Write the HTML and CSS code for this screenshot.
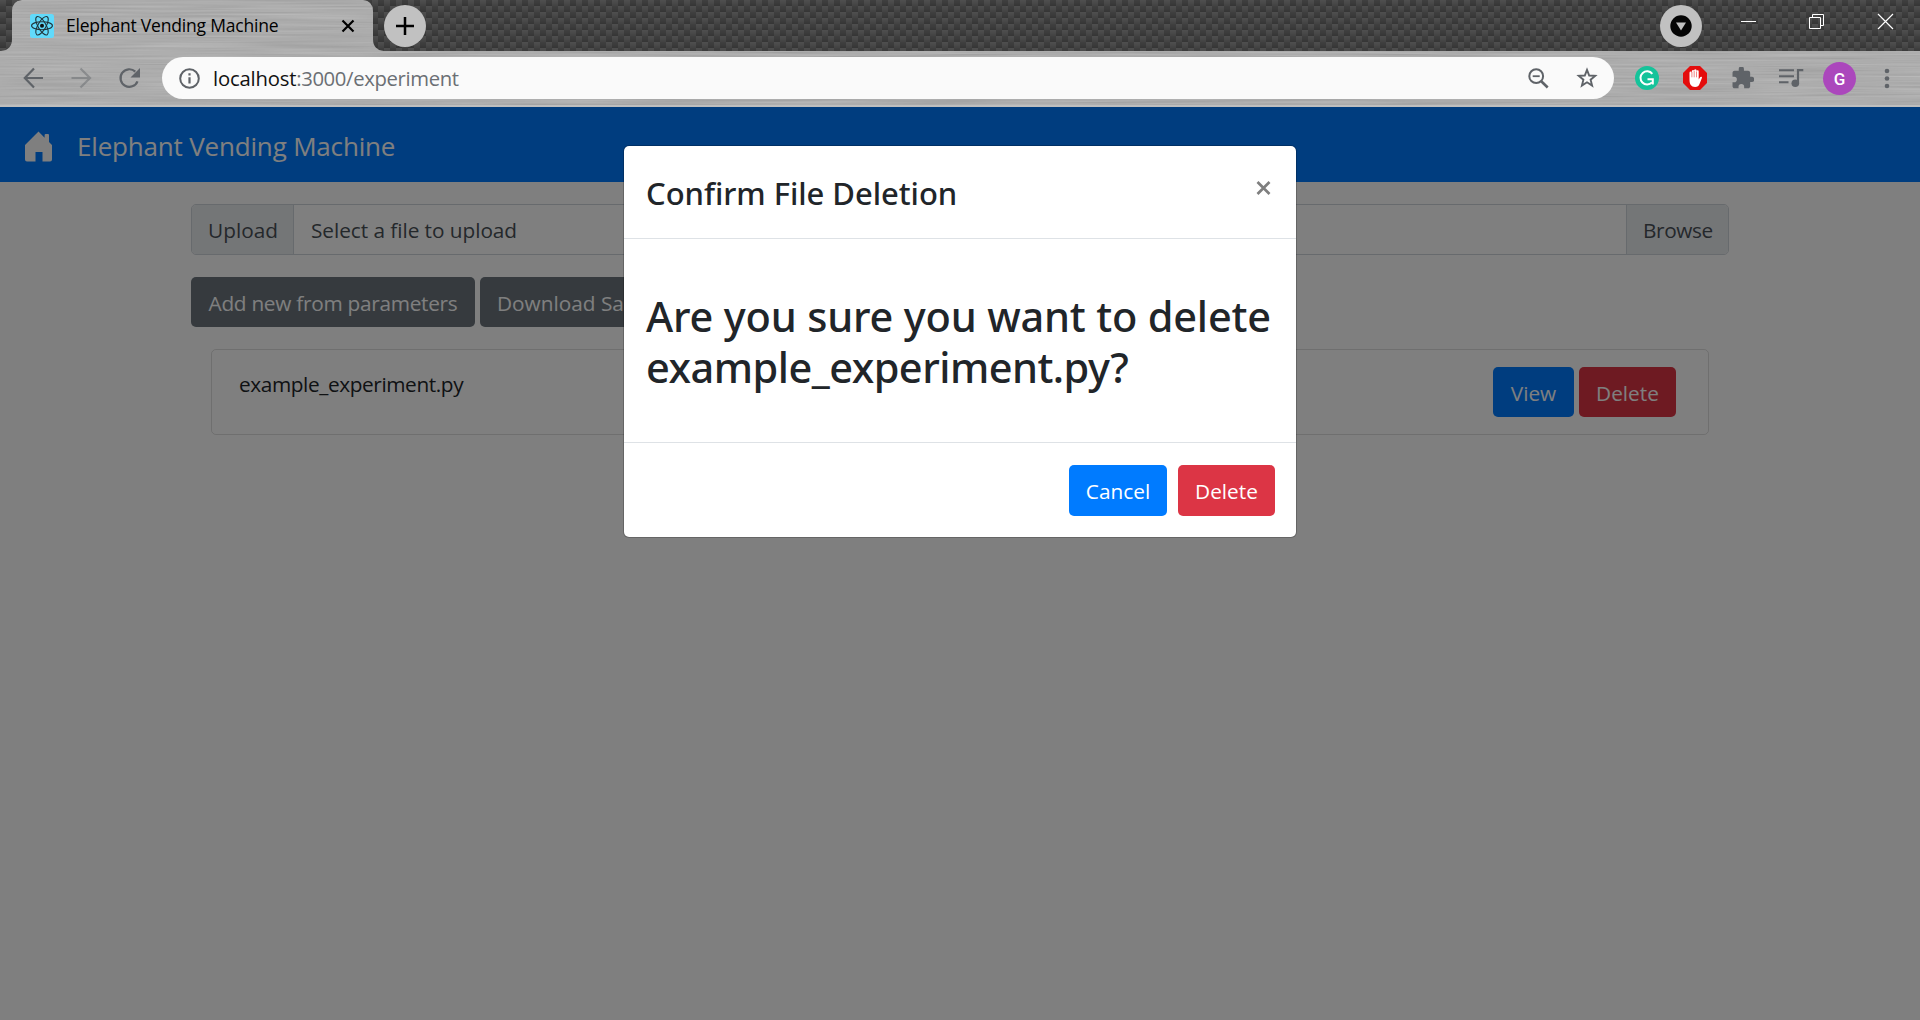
FILE: index.html
```html
<!DOCTYPE html>
<html lang="en">
<head>
<meta charset="utf-8">
<title>Elephant Vending Machine</title>
<link rel="stylesheet" href="styles.css">
</head>
<body>
<header class="browser">
  <svg class="metal" width="1920" height="107" viewBox="0 0 1920 107">
    <defs>
      <filter id="brushed" x="0" y="0" width="100%" height="100%" color-interpolation-filters="sRGB">
        <feTurbulence type="fractalNoise" baseFrequency="0.008 0.5" numOctaves="2" seed="4"/>
        <feColorMatrix values="0.13 0 0 0 0.61  0.13 0 0 0 0.61  0.13 0 0 0 0.61  0 0 0 0 1"/>
        <feComposite operator="in" in2="SourceGraphic"/>
      </filter>
    </defs>
    <path filter="url(#brushed)" d="M0 51H1Q12 50 12 39V11Q12 1 22 0H363Q373 1 373 11V39Q373 50 384 51H1920V107H0Z"/>
    <path fill="#bebebe" d="M0 105H1920V107H0Z"/>
  </svg>
  <div class="tabstrip">
    <div class="tab">
      <svg class="favicon" width="24" height="24" viewBox="0 0 24 24">
        <rect width="24" height="24" rx="2.5" fill="#61dafb"/>
        <g fill="none" stroke="#20343a" stroke-width="1.1">
          <ellipse cx="12" cy="11.7" rx="10.4" ry="4"/>
          <ellipse cx="12" cy="11.7" rx="10.4" ry="4" transform="rotate(60 12 11.7)"/>
          <ellipse cx="12" cy="11.7" rx="10.4" ry="4" transform="rotate(120 12 11.7)"/>
        </g>
        <circle cx="12" cy="11.7" r="2" fill="#111"/>
      </svg>
      <span class="tab-title">Elephant Vending Machine</span>
      <svg class="tab-close" width="14" height="14" viewBox="0 0 14 14"><path d="M1.5 1.5l11 11M12.500 1.500l-11 11" stroke="#000" stroke-width="2.200"/></svg>
    </div>
    <div class="round new-tab">
      <svg width="18" height="18" viewBox="0 0 18 18"><path d="M9 0v18M0 9h18" stroke="#000" stroke-width="2.500"/></svg>
    </div>
    <div class="round search-tabs">
      <svg width="22" height="22" viewBox="0 0 22 22"><circle cx="11" cy="11" r="10.700" fill="#050505"/><path d="M6 7.500h10l-5 8z" fill="#c0c0c0"/></svg>
    </div>
    <svg class="window-buttons" width="155" height="17" viewBox="0 0 155 17" fill="none" stroke="#fff">
      <path d="M1 8.500h15"/>
      <path d="M69.500 4.500h11v11h-11zM72.500 4.500v-3h11v11h-3"/>
      <path d="M138 1l15 15M153 1l-15 15" stroke-width="1.200"/>
    </svg>
  </div>
  <div class="toolbar">
    <svg class="nav-icons" width="118" height="22" viewBox="0 0 118 22" fill="none" stroke="#5f6368" stroke-width="2.200">
      <path d="M20 11H2M11 1.500L1.800 11l9.200 9.500"/>
      <path opacity=".45" d="M48.500 11h18M57.500 1.500L67 11l-9.500 9.500"/>
      <path d="M114.500 14.300A8.800 8.800 0 1 1 112.300 4.600"/>
      <path d="M117 1v9.500h-9.500z" fill="#5f6368" stroke="none"/>
    </svg>
    <div class="address">
      <svg width="21" height="21" viewBox="0 0 21 21"><circle cx="10.500" cy="10.500" r="9.300" fill="none" stroke="#5f6368" stroke-width="2"/><path d="M9.400 9.300h2.200v6.200H9.400zM9.400 5.300h2.200v2.200H9.400z" fill="#5f6368"/></svg>
      <span class="url"><b>localhost</b>:3000/experiment</span>
      <svg class="magnifier" width="21" height="21" viewBox="0 0 21 21" fill="none" stroke="#5f6368"><circle cx="8.200" cy="8.200" r="6.900" stroke-width="2"/><path d="M4.700 8.200h7" stroke-width="1.800"/><path d="M13 13l6.700 6.500" stroke-width="2.600"/></svg>
      <svg class="star" width="22" height="22" viewBox="0 0 22 22"><path d="M11 2.900l2.200 5.600 6 .4-4.600 3.800 1.500 5.900-5.100-3.300-5.100 3.300 1.500-5.900L2.800 8.900l6-.4z" fill="none" stroke="#5f6368" stroke-width="1.900"/></svg>
    </div>
    <svg class="ext grammarly" width="24" height="24" viewBox="0 0 24 24"><circle cx="12" cy="12" r="12" fill="#15c39a"/><path d="M17.300 7.800A6.600 6.600 0 1 0 17 16.300" fill="none" stroke="#fff" stroke-width="2"/><path d="M12.500 13.200h5.300v5.300" fill="none" stroke="#fff" stroke-width="2"/></svg>
    <svg class="ext adblock" width="24" height="24" viewBox="0 0 24 24"><path d="M7 0h10l7 7v10l-7 7H7l-7-7V7z" fill="#e40d0d"/><path d="M6.500 13.800V6.800a1.200 1.200 0 0 1 2.400 0V4.800a1.200 1.200 0 0 1 2.300 0V4a1.200 1.200 0 0 1 2.300 0v1.200a1.100 1.100 0 0 1 2.200 .2v8l1.400-2.200c.6-1 2.200-.5 1.900.6l-2.400 6c-.8 2.200-2.200 3.200-4.500 3.200-4 0-5.600-2.700-5.600-7.200z" fill="#fff"/><path d="M8.900 6v5.300M11.200 5v6.300M13.500 5.500v5.800" stroke="#e40d0d" stroke-width=".5"/></svg>
    <svg class="ext puzzle" width="22" height="22" viewBox="1.500 1.500 21.200 21.200"><path fill="#5f6368" d="M20.500 11H19V7c0-1.100-.9-2-2-2h-4V3.500a2.500 2.500 0 0 0-5 0V5H4c-1.100 0-2 .9-2 2v3.800h1.500a2.700 2.700 0 0 1 0 5.400H2V20c0 1.100.9 2 2 2h3.800v-1.500a2.700 2.700 0 0 1 5.400 0V22H17c1.100 0 2-.9 2-2v-4h1.500a2.500 2.500 0 0 0 0-5z"/></svg>
    <svg class="ext queue" width="25" height="20" viewBox="0 0 25 20"><path d="M0 2.200h15M0 8.200h15M0 14.200h9.500" stroke="#5f6368" stroke-width="2.100"/><circle cx="16.300" cy="15.300" r="3.800" fill="#5f6368"/><path d="M19 15.300V2.200h5.300" fill="none" stroke="#5f6368" stroke-width="2.200"/></svg>
    <span class="avatar">G</span>
    <svg class="ext kebab" width="6" height="21" viewBox="0 0 6 21" fill="#5f6368"><circle cx="3" cy="3" r="2.300"/><circle cx="3" cy="10.500" r="2.300"/><circle cx="3" cy="18" r="2.300"/></svg>
  </div>
</header>
<main class="page">
  <nav class="navbar">
    <svg width="27" height="31" viewBox="0 0 27 31" fill="#fff"><path d="M13.500 0.500L19.600 6.700V4.200q0-1.200 1.200-1.200h2.200q1 0 1 1.200V11.100L27 14V28.500q0 2-2 2H17.500V21H10.500V30.500H2q-2 0-2-2V14z"/></svg>
    <span class="brand">Elephant Vending Machine</span>
  </nav>
  <div class="container">
    <div class="upload">
      <span class="upload-label">Upload</span>
      <span class="upload-file">Select a file to upload</span>
      <span class="upload-browse">Browse</span>
    </div>
    <div class="actions">
      <button class="btn secondary add">Add new from parameters</button>
      <button class="btn secondary download">Download Sample</button>
    </div>
    <div class="file-card">
      <span class="file-name">example_experiment.py</span>
      <div class="file-actions">
        <button class="btn primary view">View</button>
        <button class="btn danger remove">Delete</button>
      </div>
    </div>
  </div>
  <div class="backdrop">
    <section class="modal">
      <div class="modal-header">
        <h4>Confirm File Deletion</h4>
        <svg width="15" height="14" viewBox="0 0 15 14"><path d="M1.500 1l12 12M13.500 1l-12 12" stroke="#7f7f7f" stroke-width="2.700"/></svg>
      </div>
      <div class="modal-body">
        <h2>Are you sure you want to delete<br><span class="target">example_experiment.py?</span></h2>
      </div>
      <div class="modal-footer">
        <button class="btn primary cancel">Cancel</button>
        <button class="btn danger confirm">Delete</button>
      </div>
    </section>
  </div>
</main>
</body>
</html>
```
FILE: styles.css
```css
* { box-sizing: border-box; }

body {
  margin: 0;
  width: 1920px;
  height: 1020px;
  overflow: hidden;
  display: flex;
  flex-direction: column;
  font: 20.8px "Open Sans", sans-serif;
  color: #212529;
}

svg { display: block; flex: none; }
span, h2, h4 { white-space: nowrap; }

/* Browser frame: woven dark strip with brushed-metal tab and toolbar */
.browser {
  position: relative;
  height: 107px;
  flex: none;
  background:
    linear-gradient(rgba(0, 0, 0, 0), rgba(0, 0, 0, .16)) 0 0 / 12px 6px,
    conic-gradient(#404040 25%, #4f4f4f 0 50%, #404040 0 75%, #4f4f4f 0) 0 0 / 12px 12px;
}
.metal { position: absolute; left: 0; top: 0; }
.tabstrip, .toolbar { position: relative; display: flex; align-items: center; }
.tabstrip { height: 51px; padding-left: 12px; }
.tab { width: 361px; height: 51px; padding: 0 18px 0 18px; display: flex; align-items: center; }
.tab-title { margin: 0 0 1px 12px; font-size: 17.5px; letter-spacing: -.2px; color: #000; }
.tab-close { margin-left: auto; }
.round {
  width: 42px; height: 42px; border-radius: 50%;
  background: #c1c1c1;
  display: flex; align-items: center; justify-content: center;
}
.new-tab { margin-left: 11px; }
.search-tabs { margin-left: 1234px; }
.window-buttons { margin: 0 0 8px 38px; }

.toolbar { height: 56px; padding-left: 22px; }
.nav-icons { margin: 0 0 2px 1px; }
.address {
  width: 1452px; height: 42px; margin: 0 0 2px 21px; padding: 0 16px 0 17px;
  border-radius: 21px; background: #fafafa;
  display: flex; align-items: center;
}
.url { margin-left: 13px; font-size: 20.3px; letter-spacing: -.36px; color: #6b6f74; }
.url b { font-weight: 400; color: #111; letter-spacing: -.2px; }
.magnifier { margin-left: auto; }
.star { margin-left: 27px; }
.ext { margin-bottom: 2px; }
.grammarly { margin-left: 21px; }
.adblock { margin-left: 24px; }
.puzzle { margin-left: 25px; }
.queue { margin-left: 25px; }
.avatar {
  width: 33px; height: 33px; margin: 0 0 1px 19px; border-radius: 50%;
  background: #ab47bc; color: #fff;
  font: 500 17px/34px Roboto, sans-serif; text-align: center;
}
.kebab { margin-left: 28px; }

/* Application page */
.page { position: relative; flex: 1; background: #fff; }
.navbar { height: 75px; padding-left: 25px; background: #007bff; color: #fff; display: flex; align-items: center; }
.navbar svg { margin-top: 3px; }
.brand { margin: 2px 0 0 25px; font-size: 26px; letter-spacing: -.18px; }
.container { padding: 22px 191px 0; }
.upload {
  height: 51px; display: flex; line-height: 50px;
  border: 1px solid #ced4da; border-radius: 5px; overflow: hidden;
  color: #495057;
}
.upload-label { width: 102px; padding-left: 16px; background: #e9ecef; border-right: 1px solid #ced4da; }
.upload-file { flex: 1; padding-left: 17px; letter-spacing: -.05px; }
.upload-browse { width: 102px; padding-left: 16px; background: #e9ecef; border-left: 1px solid #ced4da; letter-spacing: -.4px; }
.actions { display: flex; gap: 5px; margin-top: 22px; }
.btn {
  height: 50px; padding: 0; border: 0; border-radius: 5px;
  font: inherit; line-height: 52px; color: #fff; text-align: center; white-space: nowrap;
}
.primary { background: #007bff; }
.secondary { background: #6c757d; }
.danger { background: #dc3545; }
.add { width: 284px; letter-spacing: -.28px; }
.download { width: 213px; padding-left: 17px; text-align: left; }
.file-card {
  height: 86px; margin: 22px 20px 0; padding: 17px 32px 0 27px;
  border: 1px solid rgba(0, 0, 0, .125); border-radius: 5px;
  display: flex; justify-content: space-between;
}
.file-name { line-height: 34px; letter-spacing: -.4px; }
.file-actions { display: flex; gap: 5px; }
.view { width: 81px; }
.remove { width: 97px; }

/* Dialog */
.backdrop {
  position: absolute; inset: 0; padding-top: 38px;
  background: rgba(0, 0, 0, .5);
  display: flex; justify-content: center; align-items: flex-start;
}
.modal {
  width: 674px; height: 393px;
  background: #fff; background-clip: padding-box;
  border: 1px solid rgba(0, 0, 0, .2); border-radius: 6px;
  display: flex; flex-direction: column;
}
.modal h2, .modal h4 { margin: 0; font-family: "Noto Sans", sans-serif; font-weight: 500; }
.modal-header {
  height: 93px; padding: 21px 25px 0 22px; border-bottom: 1px solid #dee2e6;
  display: flex; justify-content: space-between; align-items: flex-start;
}
.modal-header h4 { font-size: 31px; line-height: 52px; letter-spacing: -.05px; }
.modal-header svg { margin-top: 14px; }
.modal-body { flex: 1; padding: 52px 21px 0 22px; }
.modal-body h2 { font-size: 41.5px; line-height: 51px; letter-spacing: -.18px; }
.target { letter-spacing: -.52px; }
.modal-footer {
  height: 95px; padding: 1px 21px 0; border-top: 1px solid #dee2e6;
  display: flex; align-items: center; justify-content: flex-end; gap: 11px;
}
.modal-footer .btn { height: 51px; line-height: 52px; }
.cancel { width: 98px; }
.confirm { width: 97px; }
```
